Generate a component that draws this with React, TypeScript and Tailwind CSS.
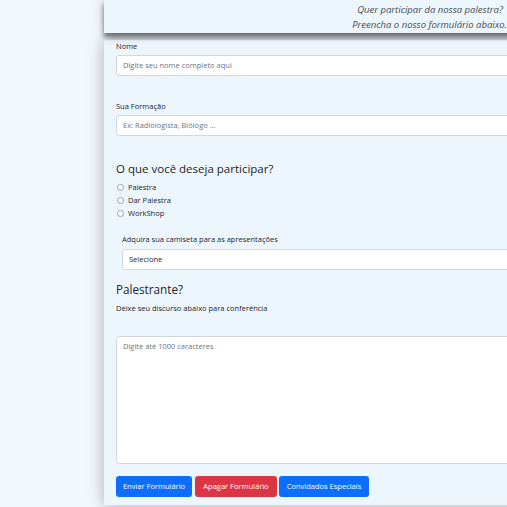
const font = { fontFamily: '"Open Sans", "Liberation Sans", sans-serif' };

function Field({ label, placeholder }: { label: string; placeholder: string }) {
  return (
    <div className="flex flex-col">
      <label className="text-[7.5px] leading-[10px] text-[#212529]">{label}</label>
      <div className="mt-[4px] flex h-[21px] w-[460px] items-center rounded-[3px] border border-[#d3d8dd] bg-white px-[6px] text-[7.5px] text-[#6c757d]">
        {placeholder}
      </div>
    </div>
  );
}

function Radio({ label }: { label: string }) {
  return (
    <div className="flex h-[13px] items-center gap-[4px]">
      <span className="h-[7px] w-[7px] rounded-full border border-[#9aa0a6] bg-white" />
      <span className="text-[7.5px] text-[#212529]">{label}</span>
    </div>
  );
}

export default function App() {
  return (
    <div
      className="flex h-[507px] w-[507px] flex-col overflow-hidden bg-[#f1f8fe] pl-[104px]"
      style={font}
    >
      <div className="relative z-10 flex h-[33px] w-[500px] shrink-0 flex-col items-end justify-end bg-[#eef6fd] pb-[1px] pr-[97px] shadow-[0_4px_5px_rgba(0,0,0,0.5),0_0_14px_rgba(0,0,0,0.18)]">
        <p className="pr-[4px] text-[9.5px] italic leading-[15px] text-[#444b52]">Quer participar da nossa palestra?</p>
        <p className="text-[9.5px] italic leading-[15px] text-[#444b52]">Preencha o nosso formulário abaixo.</p>
      </div>

      <form className="mt-[7px] flex w-[500px] flex-col bg-[#eef6fd] px-[12px] pb-[8px] pt-[1px] shadow-[0_0_16px_rgba(0,0,0,0.3)]">
        <Field label="Nome" placeholder="Digite seu nome completo aqui" />
        <div className="mt-[25px]">
          <Field label="Sua Formação" placeholder="Ex: Radiologista, Biólogo ..." />
        </div>

        <h2 className="mt-[24px] text-[11.5px] leading-[18px] text-[#212529]">O que você deseja participar?</h2>
        <div className="mt-[3px] flex flex-col pl-[1px]">
          <Radio label="Palestra" />
          <Radio label="Dar Palestra" />
          <Radio label="WorkShop" />
        </div>

        <div className="mt-[14px] flex flex-col pl-[6px]">
          <label className="text-[7.5px] leading-[10px] text-[#212529]">Adquira sua camiseta para as apresentações</label>
          <div className="mt-[5px] flex h-[21px] w-[460px] items-center rounded-[3px] border border-[#d3d8dd] bg-white px-[6px] text-[7.5px] text-[#212529]">
            Selecione
          </div>
        </div>

        <h2 className="mt-[10px] text-[11.7px] leading-[18px] text-[#212529]">Palestrante?</h2>
        <p className="mt-[5px] text-[7.5px] leading-[10px] text-[#212529]">Deixe seu discurso abaixo para conferência</p>

        <div className="mt-[23px] h-[128px] w-[460px] rounded-[3px] border border-[#d3d8dd] bg-white px-[6px] py-[4px] text-[7.5px] text-[#6c757d]">
          Digite até 1000 caracteres
        </div>

        <div className="mt-[12px] flex gap-[3px]">
          <button type="button" className="h-[21px] w-[76px] rounded-[3px] bg-[#0d6efd] text-[7.5px] text-white">Enviar Formulário</button>
          <button type="button" className="h-[21px] w-[82px] rounded-[3px] bg-[#dc3545] text-[7.5px] text-white">Apagar Formulário</button>
          <button type="button" className="-ml-[1px] h-[21px] w-[90px] rounded-[3px] bg-[#0d6efd] text-[7.5px] text-white">Convidados Especiais</button>
        </div>
      </form>
    </div>
  );
}
